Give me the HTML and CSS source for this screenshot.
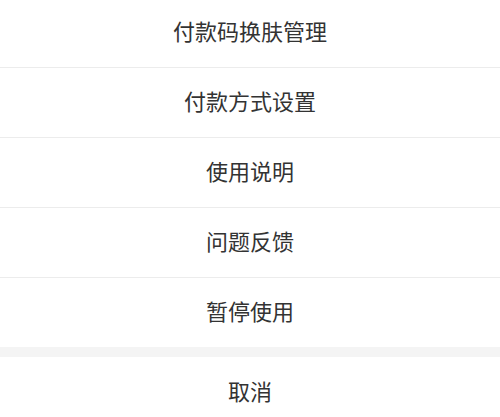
FILE: index.html
```html
<!DOCTYPE html>
<html lang="zh-CN">
<head>
<meta charset="utf-8">
<title>付款码设置</title>
<link rel="stylesheet" href="styles.css">
</head>
<body>
<div class="sheet">
  <ul class="menu">
    <li class="item">付款码换肤管理</li>
    <li class="item">付款方式设置</li>
    <li class="item">使用说明</li>
    <li class="item">问题反馈</li>
    <li class="item">暂停使用</li>
  </ul>
  <div class="gap"></div>
  <div class="item cancel">取消</div>
</div>
</body>
</html>
```

FILE: styles.css
```css
html, body {
  margin: 0;
  padding: 0;
  background: #ffffff;
}
body {
  font-family: "Noto Sans CJK SC", "Noto Sans", sans-serif;
  color: #333333;
  overflow: hidden;
}
.sheet {
  display: flex;
  flex-direction: column;
  margin-top: -2px;
}
.menu {
  list-style: none;
  margin: 0;
  padding: 0;
  display: flex;
  flex-direction: column;
}
.item {
  box-sizing: border-box;
  height: 70px;
  padding-bottom: 5px;
  display: flex;
  align-items: center;
  justify-content: center;
  font-size: 22px;
  line-height: 1;
  background: #ffffff;
  border-bottom: 1px solid #ececec;
}
.menu .item:last-child {
  height: 69px;
  border-bottom: none;
}
.gap {
  height: 10px;
  background: #f4f4f4;
}
.cancel {
  border-bottom: none;
}
```
